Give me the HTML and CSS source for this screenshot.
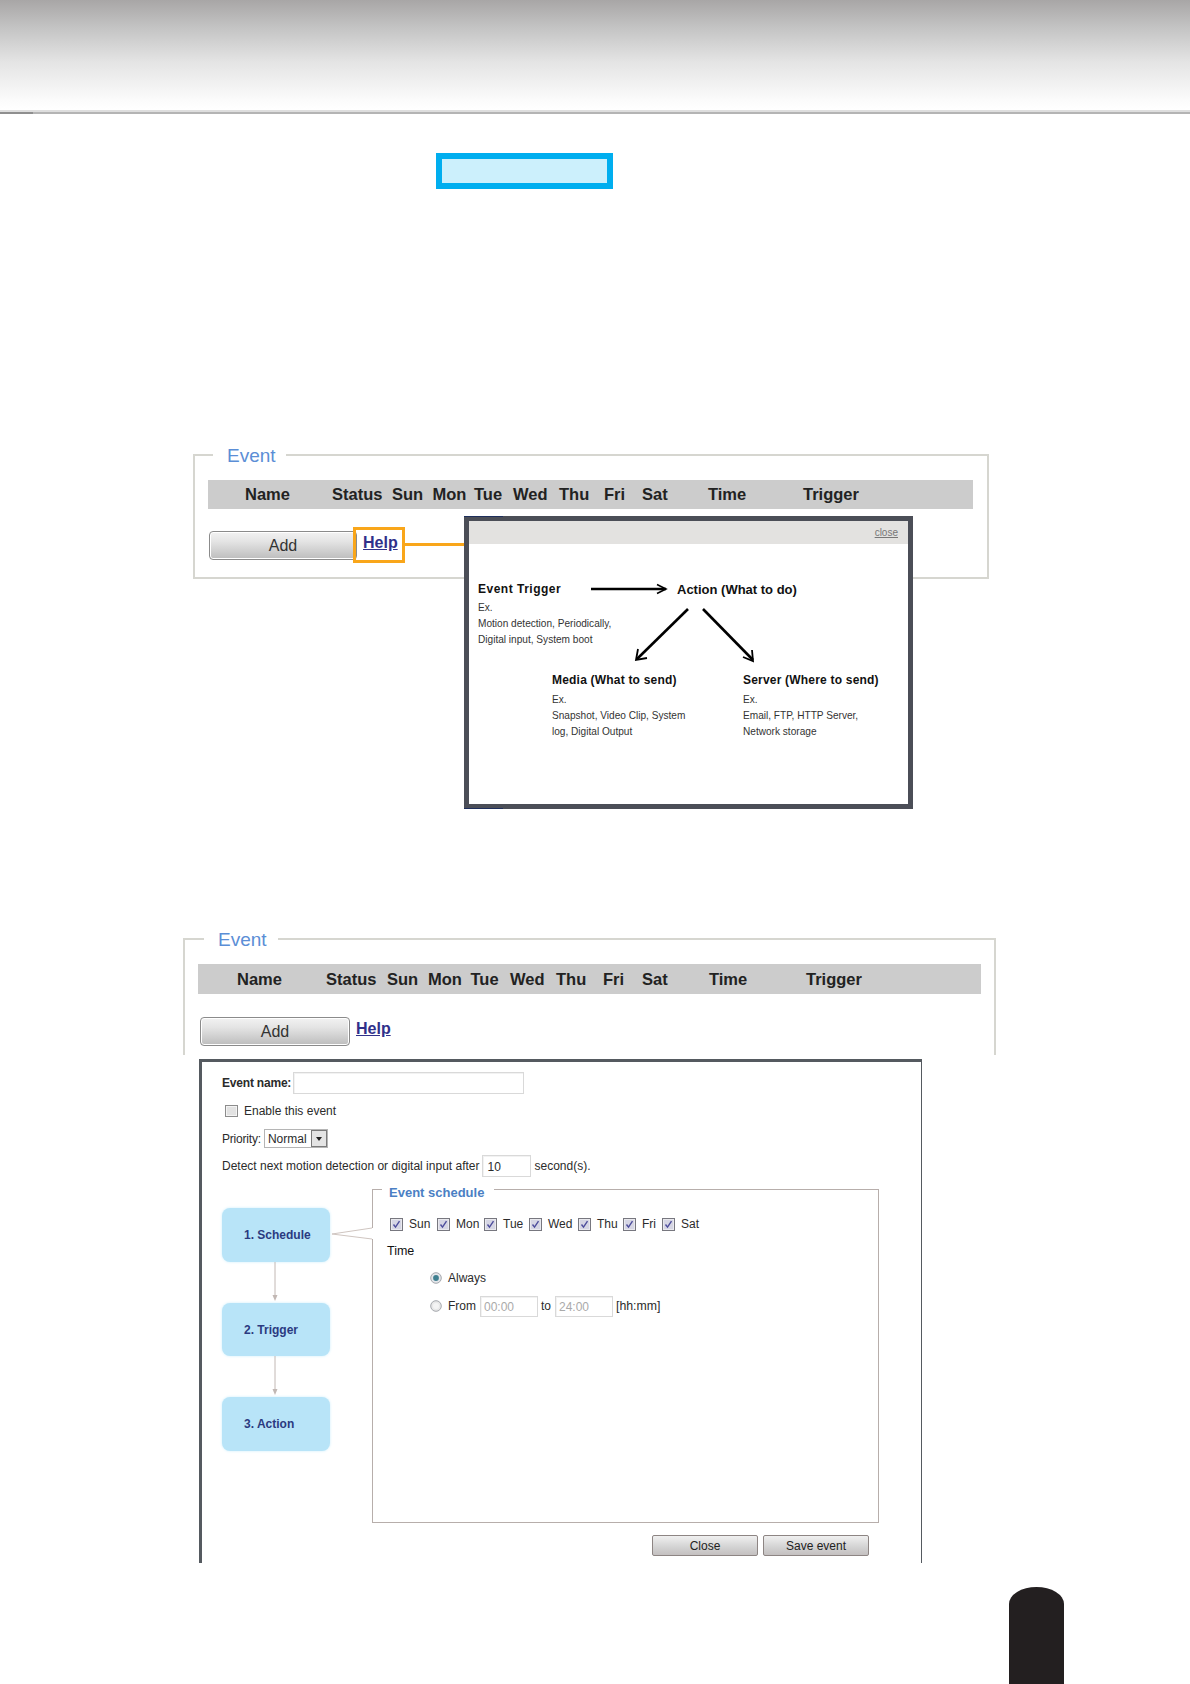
FILE: index.html
```html
<!DOCTYPE html>
<html lang="en">
<head>
<meta charset="utf-8">
<title>Event settings</title>
<link rel="stylesheet" href="styles.css">
</head>
<body>
<svg class="defs" width="0" height="0" aria-hidden="true">
  <symbol id="check" viewBox="0 0 13 13">
    <rect x="0.5" y="0.5" width="12" height="12" fill="#e9e9ee" stroke="#77777f"/>
    <rect x="2" y="2" width="9" height="9" fill="#d6d6e4"/>
    <path d="M3.5 6.5l2 2.6 4-6" fill="none" stroke="#4d4d9c" stroke-width="1.4"/>
  </symbol>
  <symbol id="radio-on" viewBox="0 0 12 12">
    <circle cx="6" cy="6" r="5.3" fill="#e4e6ea" stroke="#a5a8ad"/>
    <circle cx="6" cy="6" r="2.9" fill="#3f7f90"/>
  </symbol>
  <symbol id="radio-off" viewBox="0 0 12 12">
    <circle cx="6" cy="6" r="5.3" fill="#e8e8e8" stroke="#a5a8ad"/>
    <circle cx="6" cy="6" r="3" fill="#f4f4f4"/>
  </symbol>
</svg>

<header class="banner"></header>
<div class="callout"></div>

<section class="box box-a">
  <div class="legend">Event</div>
  <div class="table-head cols-a">
    <span>Name</span><span>Status</span><span>Sun</span><span>Mon</span><span>Tue</span><span>Wed</span><span>Thu</span><span>Fri</span><span>Sat</span><span>Time</span><span>Trigger</span>
  </div>
  <div class="actions">
    <button class="add">Add</button>
    <a class="help" href="#">Help</a>
  </div>
  <div class="help-mark"></div>
  <div class="help-link"></div>

  <div class="popup">
    <div class="popup-bar"><a class="close" href="#">close</a></div>
    <div class="popup-top">
      <div class="note note-trigger">
        <h4>Event Trigger</h4>
        <p>Ex.</p>
        <p>Motion detection, Periodically,</p>
        <p>Digital input, System boot</p>
      </div>
      <h4 class="action-title">Action (What to do)</h4>
    </div>
    <div class="popup-bottom">
      <div class="note note-media">
        <h4>Media (What to send)</h4>
        <p>Ex.</p>
        <p>Snapshot, Video Clip, System</p>
        <p>log, Digital Output</p>
      </div>
      <div class="note">
        <h4>Server (Where to send)</h4>
        <p>Ex.</p>
        <p>Email, FTP, HTTP Server,</p>
        <p>Network storage</p>
      </div>
    </div>
    <svg class="popup-arrows" width="439" height="283" viewBox="0 0 439 283" aria-hidden="true">
      <g fill="none" stroke="#000" stroke-width="2.6">
        <path d="M122 68H197"/>
        <path d="M188 63.5l9 4.5-9 4.5" stroke-width="1.6"/>
        <path d="M219 88L168 138"/>
        <path d="M169 128l-2 11 11-2" stroke-width="1.8"/>
        <path d="M234 88L284 139"/>
        <path d="M274 136l10 4-1-11" stroke-width="1.8"/>
      </g>
    </svg>
  </div>
</section>

<section class="box box-b">
  <div class="legend legend-b">Event</div>
  <div class="table-head cols-b">
    <span>Name</span><span>Status</span><span>Sun</span><span>Mon</span><span>Tue</span><span>Wed</span><span>Thu</span><span>Fri</span><span>Sat</span><span>Time</span><span>Trigger</span>
  </div>
  <div class="actions actions-b">
    <button class="add">Add</button>
    <a class="help" href="#">Help</a>
  </div>
</section>

<section class="panel">
  <div class="row row-name">
    <label class="strong">Event name:</label>
    <span class="field field-name"></span>
  </div>
  <div class="row row-enable">
    <span class="check-off"></span>
    <span>Enable this event</span>
  </div>
  <div class="row row-priority">
    <span>Priority:</span>
    <span class="select"><span class="select-value">Normal</span><span class="select-btn"></span></span>
  </div>
  <div class="row row-detect">
    <span>Detect next motion detection or digital input after</span>
    <span class="field field-sec">10</span>
    <span>second(s).</span>
  </div>

  <div class="main">
    <ol class="steps">
      <li class="step step-tall">1. Schedule</li>
      <li class="link"><svg width="8" height="41" viewBox="0 0 8 41" aria-hidden="true"><path d="M4 0V36" stroke="#c2b8b4" fill="none"/><path d="M1.5 33h5L4 39z" fill="#c2b8b4"/></svg></li>
      <li class="step">2. Trigger</li>
      <li class="link"><svg width="8" height="41" viewBox="0 0 8 41" aria-hidden="true"><path d="M4 0V36" stroke="#c2b8b4" fill="none"/><path d="M1.5 33h5L4 39z" fill="#c2b8b4"/></svg></li>
      <li class="step step-tall">3. Action</li>
    </ol>

    <div class="schedule">
      <div class="schedule-legend">Event schedule</div>
      <svg class="pointer" width="41" height="14" viewBox="0 0 41 14" aria-hidden="true">
        <rect x="38" y="1" width="3" height="11" fill="#fff"/>
        <path d="M0 7L40 1M0 7L40 12" stroke="#cfc5c0" fill="none"/>
      </svg>
      <div class="days">
        <span class="day"><svg class="tick"><use href="#check"/></svg>Sun</span>
        <span class="day"><svg class="tick"><use href="#check"/></svg>Mon</span>
        <span class="day"><svg class="tick"><use href="#check"/></svg>Tue</span>
        <span class="day"><svg class="tick"><use href="#check"/></svg>Wed</span>
        <span class="day"><svg class="tick"><use href="#check"/></svg>Thu</span>
        <span class="day"><svg class="tick"><use href="#check"/></svg>Fri</span>
        <span class="day"><svg class="tick"><use href="#check"/></svg>Sat</span>
      </div>
      <div class="time-label">Time</div>
      <div class="time-row time-always"><svg class="radio"><use href="#radio-on"/></svg><span>Always</span></div>
      <div class="time-row time-from">
        <svg class="radio"><use href="#radio-off"/></svg><span>From</span>
        <span class="field field-time field-time-first">00:00</span><span>to</span>
        <span class="field field-time">24:00</span><span class="hhmm">[hh:mm]</span>
      </div>
    </div>
  </div>

  <div class="footer">
    <button class="small-btn">Close</button>
    <button class="small-btn">Save event</button>
  </div>
</section>

<div class="page-tab"></div>
</body>
</html>
```

FILE: styles.css
```css
* { box-sizing: border-box; }
html, body { margin: 0; padding: 0; }
body {
  position: relative;
  width: 1190px;
  height: 1684px;
  overflow: hidden;
  background: #fff;
  font-family: "Liberation Sans", Arial, sans-serif;
  font-size: 12px;
  color: #2b2b2b;
}
.defs { position: absolute; }

/* banner */
.banner {
  position: relative;
  height: 114px;
  background: linear-gradient(#a8a6a6 0, #c4c4c4 28px, #e4e4e4 62px, #fbfbfb 100px, #fff 109px);
  border-bottom: 2px solid #b4b4b4;
  box-shadow: inset 0 -2px 0 #dedede;
}
.banner::after {
  content: "";
  position: absolute;
  left: 0;
  bottom: -2px;
  width: 33px;
  height: 2px;
  background: #8f8f8f;
}
.callout {
  width: 177px;
  height: 36px;
  margin: 39px 0 0 436px;
  border: 6px solid #00aeef;
  background: #ccf0fc;
}

/* event boxes */
.box {
  position: relative;
  border: 2px solid #d6d6d0;
}
.box-a {
  width: 796px;
  height: 125px;
  margin: 265px 0 0 193px;
  padding: 24px 14px 0 13px;
}
.box-b {
  width: 813px;
  height: 117px;
  margin: 359px 0 0 183px;
  padding: 24px 13px 0;
  border-bottom: 0;
}
.legend {
  position: absolute;
  top: -13px;
  left: 18px;
  padding: 0 10px 0 14px;
  background: #fff;
  font-size: 19px;
  line-height: 26px;
  color: #5b8ed6;
}
.legend-b { left: 19px; padding-right: 11px; }

.table-head {
  display: grid;
  align-items: center;
  background: #ccc;
  font-size: 16.5px;
  font-weight: bold;
  color: #222;
  white-space: nowrap;
}
.cols-a {
  height: 29px;
  padding-left: 37px;
  grid-template-columns: 87px 60px 40.5px 41.5px 39px 46px 45px 38px 66px 95px 1fr;
}
.cols-b {
  height: 30px;
  padding-left: 39px;
  grid-template-columns: 89px 61px 41px 42.5px 39.5px 46px 47px 39px 67px 97px 1fr;
}
.actions {
  display: flex;
  align-items: center;
  gap: 6px;
  margin-top: 22px;
  height: 29px;
}
.actions-b { margin-top: 23px; margin-left: 2px; height: 29px; }
.add {
  width: 148px;
  height: 100%;
  margin-left: 1px;
  padding: 0;
  border: 1px solid #8b8b8b;
  border-radius: 4px;
  background: linear-gradient(#f2f2f2, #e4e4e4 35%, #bdbdbd);
  box-shadow: inset 0 0 0 1px #fff;
  font: 16px "Liberation Sans", Arial, sans-serif;
  color: #333;
}
.actions-b .add { width: 150px; margin-left: 0; }
.actions-b .help { margin-top: -6px; }
.help {
  font-size: 16px;
  font-weight: bold;
  color: #30308a;
  margin-top: -5px;
}
.help-mark {
  position: absolute;
  left: 158px;
  top: 71px;
  width: 52px;
  height: 36px;
  border: 3px solid #f9a61a;
  z-index: 2;
}
.help-link {
  position: absolute;
  left: 210px;
  top: 87px;
  width: 59px;
  height: 3px;
  background: #f9a61a;
}

/* help popup */
.popup {
  position: absolute;
  left: 269px;
  top: 60px;
  z-index: 3;
  width: 449px;
  height: 293px;
  border: 5px solid #4b4e57;
  background: #fff;
}
.popup::before,
.popup::after {
  content: "";
  position: absolute;
  left: -5px;
  width: 39px;
  height: 1px;
  background: #1e2f5c;
}
.popup::before { top: -5px; }
.popup::after { bottom: -5px; }
.popup-bar {
  display: flex;
  justify-content: flex-end;
  align-items: center;
  height: 23px;
  padding-right: 10px;
  background: #e3e2e0;
}
.close { font-size: 10px; color: #777; }
.popup-top {
  display: flex;
  margin-top: 37px;
  padding-left: 9px;
}
.note { font-size: 10.1px; line-height: 16px; color: #333; }
.note h4 { margin: 0 0 3px; font-size: 12px; line-height: 16px; letter-spacing: .2px; color: #111; }
.note p { margin: 0; white-space: nowrap; }
.note-trigger { width: 199px; }
.note-trigger h4 { letter-spacing: .5px; }
.action-title { margin: 1px 0 0; font-size: 13px; line-height: 16px; color: #111; white-space: nowrap; }
.popup-bottom {
  display: flex;
  margin-top: 24px;
  padding-left: 83px;
}
.popup-bottom .note h4 { margin-bottom: 4px; }
.note-media { width: 191px; }
.popup-arrows { position: absolute; left: 0; top: 0; }

/* event editor panel */
.panel {
  width: 723px;
  height: 504px;
  margin: 4px 0 0 199px;
  padding: 10px 0 0 20px;
  border: solid #555a60;
  border-width: 3px 1px 0 3px;
  overflow: hidden;
  line-height: 14px;
}
.row { display: flex; align-items: center; white-space: nowrap; }
.strong { font-weight: bold; letter-spacing: -.2px; }
.field {
  display: block;
  border: 1px solid #d9d9d9;
  background: #fff;
  box-shadow: inset 1px 1px 0 #f2f2f2;
}
.row-name { gap: 2px; height: 22px; }
.field-name { width: 231px; height: 22px; }
.row-enable { height: 14px; margin-top: 10px; padding-left: 3px; gap: 6px; }
.check-off {
  width: 13px;
  height: 12px;
  border: 1px solid #8c8c8c;
  background: #e2e2e2;
  box-shadow: inset 0 0 0 1px #f4f4f4;
}
.row-priority { height: 19px; margin-top: 11px; gap: 3px; letter-spacing: -.2px; }
.select {
  display: flex;
  width: 64px;
  height: 19px;
  border: 1px solid #b5b5b5;
}
.select-value { flex: 1; padding: 2px 0 0 3px; letter-spacing: 0; }
.select-btn {
  position: relative;
  width: 16px;
  border: 1px solid #7a7a7a;
  background: #e4e4e4;
}
.select-btn::after {
  content: "";
  position: absolute;
  left: 4px;
  top: 6px;
  border: 3px solid transparent;
  border-top: 4px solid #222;
}
.row-detect { height: 22px; margin-top: 7px; }
.field-sec { width: 49px; height: 22px; margin: 0 3px; padding: 4px 0 0 4px; }

.main { display: flex; margin-top: 12px; }
.steps {
  width: 108px;
  margin: 0;
  padding: 19px 0 0;
  list-style: none;
}
.step {
  display: flex;
  align-items: center;
  height: 53px;
  padding-left: 22px;
  border-radius: 8px;
  background: #b8e4f8;
  box-shadow: 0 0 3px #cdeefb;
  font-weight: bold;
  color: #2b3a80;
}
.step-tall { height: 54px; }
.link { display: flex; justify-content: center; height: 41px; padding-right: 3px; }
.link svg { display: block; }

.schedule {
  position: relative;
  width: 507px;
  height: 334px;
  margin-left: 42px;
  padding: 27px 0 0 17px;
  border: 1px solid #b7aeab;
}
.schedule-legend {
  position: absolute;
  top: -5px;
  left: 9px;
  padding: 0 10px 0 7px;
  background: #fff;
  font-size: 13px;
  font-weight: bold;
  line-height: 16px;
  color: #4b7fc4;
}
.pointer { position: absolute; left: -41px; top: 37px; }
.days {
  display: grid;
  grid-template-columns: 47px 47px 45px 49px 45px 39px 1fr;
  height: 14px;
  font-size: 12px;
}
.day { display: flex; align-items: center; gap: 6px; }
.tick { width: 13px; height: 13px; flex: none; }
.time-label { margin: 13px 0 0 -3px; font-size: 12.5px; line-height: 14px; color: #111; }
.time-row { display: flex; align-items: center; white-space: nowrap; margin-left: 40px; }
.time-always { height: 14px; margin-top: 13px; }
.time-from { height: 22px; margin-top: 10px; }
.radio { width: 12px; height: 12px; flex: none; margin-right: 6px; }
.field-time {
  width: 58px;
  height: 21px;
  margin: 0 3px 0 4px;
  padding: 3px 0 0 3px;
  color: #aaa;
}
.field-time-first { margin: 0 3px 0 4px; }
.hhmm { font-size: 12.3px; }

.footer {
  display: flex;
  justify-content: flex-end;
  gap: 5px;
  margin-top: 12px;
  padding-right: 52px;
}
.small-btn {
  width: 106px;
  height: 21px;
  padding: 0;
  border: 1px solid #8d8583;
  border-radius: 2px;
  background: linear-gradient(#f0f0f0, #d2d2d2 60%, #c4c0c0);
  font: 12px "Liberation Sans", Arial, sans-serif;
  color: #222;
}

.page-tab {
  position: absolute;
  left: 1009px;
  bottom: 0;
  width: 55px;
  height: 97px;
  border-radius: 27.5px 27.5px 0 0 / 17px 17px 0 0;
  background: #231f20;
}
```
